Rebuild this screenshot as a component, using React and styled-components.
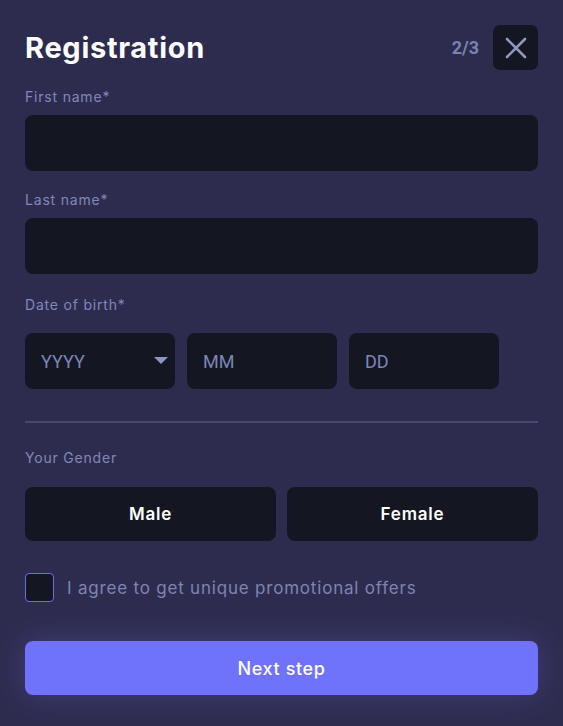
import React, { useState } from "react";
import styled, { createGlobalStyle } from "styled-components";

const GlobalStyle = createGlobalStyle`
  html, body {
    margin: 0;
    padding: 0;
    background: #2e2c4e;
  }
  * {
    box-sizing: border-box;
  }
`;

const Modal = styled.div`
  width: 563px;
  min-height: 726px;
  padding: 25px 25px 0;
  background: #2e2c4e;
  font-family: Inter, "Noto Sans", sans-serif;
  display: flex;
  flex-direction: column;
`;

const Header = styled.div`
  display: flex;
  align-items: center;
  height: 45px;
`;

const Title = styled.h1`
  flex: 1;
  margin: 0;
  font-size: 29px;
  font-weight: 700;
  color: #ffffff;
  letter-spacing: 0.7px;
`;

const Step = styled.span`
  font-family: Roboto, sans-serif;
  font-size: 18px;
  font-weight: 700;
  color: #7a82b4;
  margin-right: 14px;
`;

const CloseButton = styled.button`
  width: 45px;
  height: 45px;
  border: none;
  border-radius: 7px;
  background: #141622;
  display: flex;
  align-items: center;
  justify-content: center;
  cursor: pointer;
  padding: 0;
`;

const Label = styled.div`
  font-size: 14px;
  color: #8088b9;
  letter-spacing: 0.8px;
  margin-top: ${({ $top }) => $top || 0}px;
  line-height: 20px;
`;

const Input = styled.input`
  width: 100%;
  height: 56px;
  border: none;
  outline: none;
  border-radius: 8px;
  background: #141622;
  color: #ffffff;
  padding: 0 17px;
  font-family: Roboto, sans-serif;
  font-size: 18px;
  margin-top: 8px;
  &::placeholder {
    color: #7c86b6;
  }
`;

const DateRow = styled.div`
  display: flex;
  gap: 12px;
  margin-top: 18px;
`;

const DateBox = styled.div`
  position: relative;
  width: 150px;
  height: 56px;
  border-radius: 8px;
  background: #141622;
  display: flex;
  align-items: center;
  padding: 0 16px;
  font-family: Roboto, sans-serif;
  font-size: 18px;
  color: #7c86b6;
`;

const Caret = styled.span`
  position: absolute;
  right: 7px;
  top: 24px;
  width: 0;
  height: 0;
  border-left: 7px solid transparent;
  border-right: 7px solid transparent;
  border-top: 7px solid #8d94c6;
`;

const Divider = styled.hr`
  border: none;
  height: 2px;
  background: #474870;
  margin: 32px 0 0;
`;

const GenderRow = styled.div`
  display: grid;
  grid-template-columns: 1fr 1fr;
  gap: 11px;
  margin-top: 19px;
`;

const GenderButton = styled.button`
  height: 54px;
  border: none;
  border-radius: 8px;
  background: ${({ $active }) => ($active ? "#25244a" : "#141622")};
  color: #ffffff;
  font-family: Inter, sans-serif;
  font-size: 17px;
  font-weight: 600;
  letter-spacing: 0.8px;
  cursor: pointer;
`;

const CheckRow = styled.label`
  display: flex;
  align-items: center;
  gap: 13px;
  margin-top: 32px;
  cursor: pointer;
`;

const Box = styled.span`
  width: 29px;
  height: 29px;
  border: 1px solid #6a6de8;
  border-radius: 4px;
  background: #141622;
  display: flex;
  align-items: center;
  justify-content: center;
`;

const CheckText = styled.span`
  font-size: 17px;
  color: #7e84b1;
  letter-spacing: 0.8px;
`;

const NextButton = styled.button`
  height: 54px;
  margin-top: 39px;
  border: none;
  border-radius: 8px;
  background: #6f72fb;
  color: #ffffff;
  font-family: Inter, sans-serif;
  font-size: 18px;
  font-weight: 500;
  letter-spacing: 0.6px;
  box-shadow: 0 0 30px rgba(111, 114, 251, 0.28);
  cursor: pointer;
`;

const CloseIcon = () => (
  <svg width="22" height="22" viewBox="0 0 22 22" fill="none">
    <path d="M2 2L20 20M20 2L2 20" stroke="#8f97c4" strokeWidth="2.6" strokeLinecap="round" />
  </svg>
);

export default function App() {
  const [gender, setGender] = useState(null);
  const [agree, setAgree] = useState(false);

  return (
    <>
      <GlobalStyle />
      <Modal>
        <Header>
          <Title>Registration</Title>
          <Step>2/3</Step>
          <CloseButton aria-label="Close">
            <CloseIcon />
          </CloseButton>
        </Header>

        <Label $top={17}>First name*</Label>
        <Input />

        <Label $top={19}>Last name*</Label>
        <Input />

        <Label $top={21}>Date of birth*</Label>
        <DateRow>
          <DateBox>
            YYYY
            <Caret />
          </DateBox>
          <DateBox>MM</DateBox>
          <DateBox>DD</DateBox>
        </DateRow>

        <Divider />

        <Label $top={25}>Your Gender</Label>
        <GenderRow>
          <GenderButton $active={gender === "male"} onClick={() => setGender("male")}>
            Male
          </GenderButton>
          <GenderButton $active={gender === "female"} onClick={() => setGender("female")}>
            Female
          </GenderButton>
        </GenderRow>

        <CheckRow onClick={() => setAgree(!agree)}>
          <Box>
            {agree && (
              <svg width="16" height="16" viewBox="0 0 16 16">
                <path d="M3 8l3.5 3.5L13 4.5" stroke="#6f72fb" strokeWidth="2" fill="none" />
              </svg>
            )}
          </Box>
          <CheckText>I agree to get unique promotional offers</CheckText>
        </CheckRow>

        <NextButton>Next step</NextButton>
      </Modal>
    </>
  );
}
